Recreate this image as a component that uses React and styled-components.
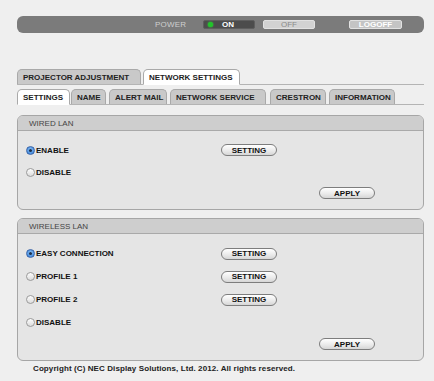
import React from "react";
import styled, { createGlobalStyle } from "styled-components";

const Global = createGlobalStyle`
  html, body { margin: 0; padding: 0; background: #efefef; }
  body { font-family: "Liberation Sans", Arial, Helvetica, sans-serif; font-size: 8px; color: #111; }
`;

const Page = styled.div`
  width: 407px;
  padding: 16px 0 0 17px;
`;

const TopBar = styled.div`
  height: 17px;
  background: #7b7b7b;
  border-radius: 6px;
  display: flex;
  align-items: center;
  padding-left: 138px;
  box-sizing: border-box;
`;

const PowerLabel = styled.span`
  color: #cfcfcf;
  font-size: 8px;
  width: 48px;
  letter-spacing: 0.2px;
`;

const BarButton = styled.div`
  width: ${p => p.$w || 52}px;
  height: 9px;
  box-sizing: border-box;
  border-radius: 2px;
  margin-right: ${p => p.$mr || 0}px;
  display: flex;
  align-items: center;
  justify-content: ${p => (p.$dark ? "flex-start" : "center")};
  font-size: 8px;
  font-weight: ${p => (p.$bold ? 700 : 400)};
  background: ${p => p.$bg || (p.$dark ? "#4c4c4c" : "#d2d2d2")};
  border: 1px solid ${p => (p.$dark ? "#5e5e5e" : "#e2e2e2")};
  color: ${p => p.$color};
  padding-left: ${p => (p.$dark ? "4px" : "0")};
`;

const Led = styled.span`
  width: 5px;
  height: 5px;
  border-radius: 50%;
  background: #21c42a;
  box-shadow: 0 0 2px #35e23a;
  margin-right: 9px;
`;

const TabRow = styled.div`
  display: flex;
  align-items: flex-end;
  border-bottom: 1px solid #b4b4b4;
  margin-top: ${p => p.$mt}px;
  height: 15px;
`;

const Tab = styled.div`
  width: ${p => p.$w}px;
  box-sizing: border-box;
  padding: 0 0 0 5px;
  margin-right: ${p => p.$gap ?? 3}px;
  display: flex;
  align-items: center;
  font-weight: 700;
  font-size: 8px;
  color: #222;
  white-space: nowrap;
  background: ${p => (p.$active ? "#ffffff" : "#c9c9c9")};
  border: 1px solid #a9a9a9;
  border-bottom: ${p => (p.$active ? "1px solid #fff" : "none")};
  border-radius: 5px 5px 0 0;
  margin-bottom: ${p => (p.$active ? "-1px" : "0")};
  height: ${p => (p.$active ? "16px" : "15px")};
`;

const Panel = styled.div`
  margin-top: ${p => p.$mt}px;
  border: 1px solid #a6a6a6;
  border-radius: 6px;
  background: #e5e5e5;
  overflow: hidden;
`;

const PanelHeader = styled.div`
  height: 14px;
  background: #cecece;
  border-bottom: 1px solid #a9a9a9;
  padding-left: 11px;
  display: flex;
  align-items: center;
  color: #444;
  font-size: 8px;
`;

const PanelBody = styled.div`
  padding: 8px 48px 6px 8px;
`;

const Row = styled.div`
  height: ${p => p.$h}px;
  display: grid;
  grid-template-columns: 195px auto;
  align-items: center;
`;

const ApplyRow = styled.div`
  height: 20px;
  display: flex;
  align-items: center;
  justify-content: flex-end;
`;

const Choice = styled.label`
  display: flex;
  align-items: center;
  font-weight: 700;
  font-size: 8px;
  color: #111;
`;

const Radio = styled.span`
  width: 9px;
  height: 9px;
  box-sizing: border-box;
  border-radius: 50%;
  margin-right: 1px;
  display: flex;
  align-items: center;
  justify-content: center;
  border: 1px solid ${p => (p.$on ? "#3a64a8" : "#9a9a9a")};
  background: ${p =>
    p.$on
      ? "radial-gradient(circle at 50% 40%, #8cc2f5, #2c79d6)"
      : "linear-gradient(#fdfdfd, #dcdcdc)"};
  &::after {
    content: "";
    width: 3px;
    height: 3px;
    border-radius: 50%;
    background: ${p => (p.$on ? "#1b2f4d" : "transparent")};
  }
`;

const PillButton = styled.div`
  width: 56px;
  height: 12px;
  box-sizing: border-box;
  border: 1px solid #7d7d7d;
  border-radius: 7px;
  background: linear-gradient(#ffffff, #e9e9e9 60%, #d6d6d6);
  display: flex;
  align-items: center;
  justify-content: center;
  font-weight: 700;
  font-size: 8px;
  color: #111;
`;

const Copyright = styled.div`
  padding: 3px 0 0 16px;
  font-weight: 700;
  font-size: 8px;
  letter-spacing: 0.1px;
  color: #222;
`;

const RadioRow = ({ label, on, setting, h }) => (
  <Row $h={h}>
    <Choice>
      <Radio $on={on} />
      {label}
    </Choice>
    {setting ? <PillButton>SETTING</PillButton> : <span />}
  </Row>
);

export default function App() {
  return (
    <>
      <Global />
      <Page>
        <TopBar>
          <PowerLabel>POWER</PowerLabel>
          <BarButton $dark $bold $color="#fff" $mr={8}>
            <Led />
            ON
          </BarButton>
          <BarButton $color="#8a8a8a" $mr={34}>OFF</BarButton>
          <BarButton $w={53} $bold $color="#fff" $bg="#c4c4c4">
            LOGOFF
          </BarButton>
        </TopBar>

        <TabRow $mt={36}>
          <Tab $w={124} $gap={2}>PROJECTOR ADJUSTMENT</Tab>
          <Tab $w={97} $active>NETWORK SETTINGS</Tab>
        </TabRow>
        <TabRow $mt={4}>
          <Tab $w={53} $gap={1} $active>SETTINGS</Tab>
          <Tab $w={35}>NAME</Tab>
          <Tab $w={58}>ALERT MAIL</Tab>
          <Tab $w={96} $gap={4}>NETWORK SERVICE</Tab>
          <Tab $w={56}>CRESTRON</Tab>
          <Tab $w={66}>INFORMATION</Tab>
        </TabRow>

        <Panel $mt={10}>
          <PanelHeader>WIRED LAN</PanelHeader>
          <PanelBody>
            <RadioRow h={22} label="ENABLE" on setting />
            <RadioRow h={22} label="DISABLE" />
            <ApplyRow>
              <PillButton>APPLY</PillButton>
            </ApplyRow>
          </PanelBody>
        </Panel>

        <Panel $mt={8}>
          <PanelHeader>WIRELESS LAN</PanelHeader>
          <PanelBody>
            <RadioRow h={23} label="EASY CONNECTION" on setting />
            <RadioRow h={23} label="PROFILE 1" setting />
            <RadioRow h={23} label="PROFILE 2" setting />
            <RadioRow h={23} label="DISABLE" />
            <ApplyRow>
              <PillButton>APPLY</PillButton>
            </ApplyRow>
          </PanelBody>
        </Panel>

        <Copyright>Copyright (C) NEC Display Solutions, Ltd. 2012. All rights reserved.</Copyright>
      </Page>
    </>
  );
}
